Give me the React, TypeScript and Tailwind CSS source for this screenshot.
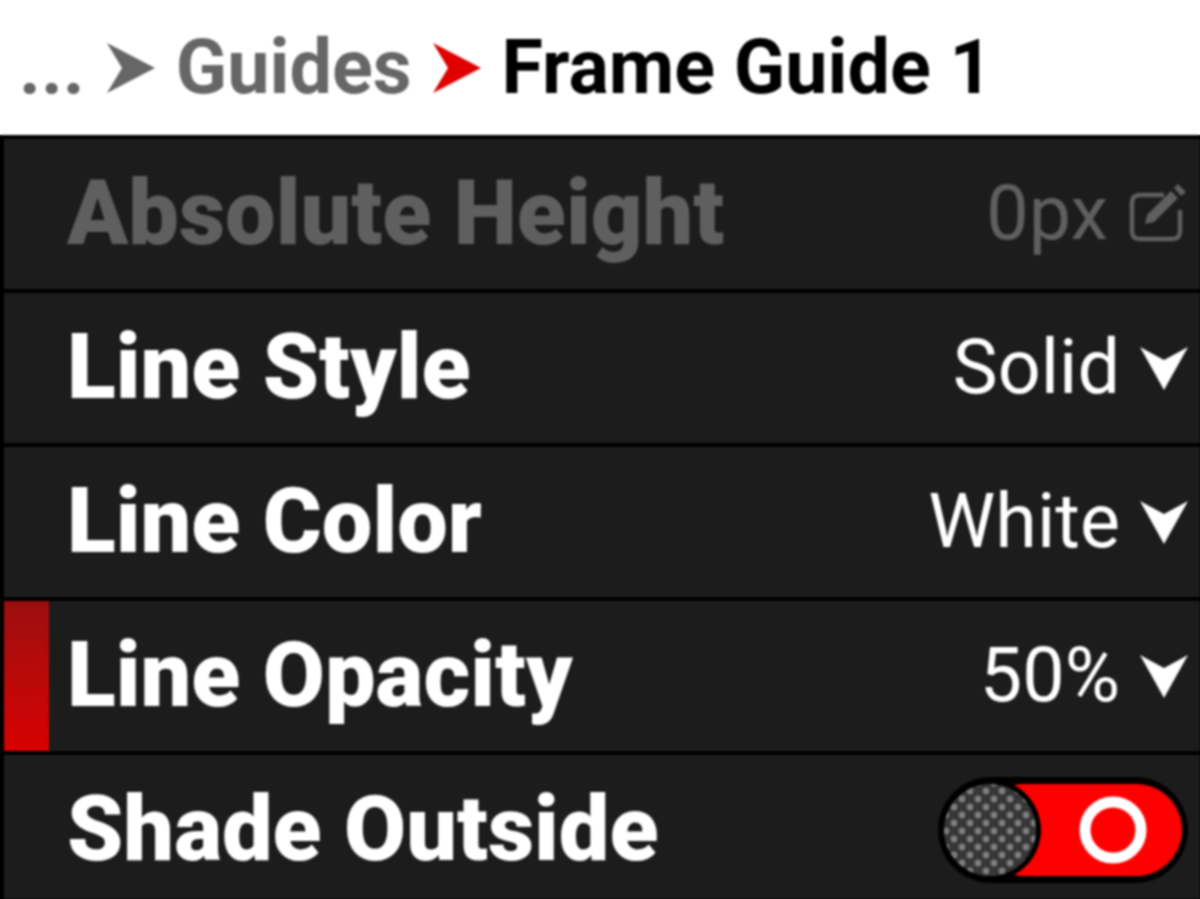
const Crumb = ({ color }: { color: string }) => (
  <svg width="48" height="50" viewBox="0 0 48 50" className="shrink-0">
    <path d="M0 0 L48 25 L0 50 L15 25 Z" fill={color} />
  </svg>
);

const Chevron = () => (
  <svg width="48" height="44" viewBox="0 0 48 44" className="shrink-0">
    <path d="M0 1 L24 14 L48 1 L24 44 Z" fill="#fff" />
  </svg>
);

const EditIcon = () => (
  <svg width="60" height="60" viewBox="0 0 60 60" className="shrink-0">
    <path d="M36 11 H12 Q4 11 4 19 V47 Q4 55 12 55 H44 Q52 55 52 47 V26" fill="none" stroke="#5f5f5f" strokeWidth="4.5" />
    <path d="M17 40 L19 31 L43 7 L50 14 L26 38 Z M46 4 L50 0 L58 8 L53 12 Z" fill="#5f5f5f" />
  </svg>
);

const Toggle = () => (
  <svg width="250" height="106" viewBox="0 0 250 106" className="shrink-0">
    <defs>
      <pattern id="dots" width="16" height="16" patternUnits="userSpaceOnUse" patternTransform="translate(4 2)">
        <rect width="16" height="16" fill="#363636" />
        <circle cx="4" cy="4" r="3.4" fill="#7d7d7d" />
        <circle cx="12" cy="12" r="3.4" fill="#7d7d7d" />
      </pattern>
    </defs>
    <rect x="0" y="0" width="250" height="106" rx="53" fill="#000" />
    <rect x="40" y="7" width="204" height="92" rx="46" fill="#ff0000" />
    <circle cx="52" cy="53" r="51" fill="#000" />
    <circle cx="52" cy="53" r="46" fill="url(#dots)" />
    <circle cx="175" cy="53" r="28" fill="none" stroke="#fff" strokeWidth="11" />
  </svg>
);

const Row = ({
  label,
  value,
  dim,
  active,
  icon,
}: {
  label: string;
  value?: string;
  dim?: boolean;
  active?: boolean;
  icon: React.ReactNode;
}) => (
  <div className="flex h-[154px] shrink-0 items-stretch border-b-[4px] border-black bg-[#1c1c1c] pr-[12px]">
    <div className={`w-[45px] shrink-0 ${active ? "bg-gradient-to-b from-[#9c0e0e] to-[#d80000]" : ""}`} />
    <div className="ml-[18px] flex flex-1 items-center justify-between">
      <span className={`text-[90px] font-black leading-none ${dim ? "text-[#5f5f5f]" : "text-white"}`}>{label}</span>
      <span className="flex items-center gap-[20px]">
        {value && (
          <span className={`text-[75.5px] font-normal leading-none ${dim ? "text-[#5f5f5f]" : "text-white"}`}>{value}</span>
        )}
        {icon}
      </span>
    </div>
  </div>
);

export default function App() {
  return (
    <div className="h-[899px] w-[1200px] overflow-hidden bg-[linear-gradient(to_bottom,#ffffff_135px,#000000_135px)]">
      <div className="flex h-[899px] w-[1200px] flex-col bg-white font-['Roboto',sans-serif] blur-[0.8px]">
        <div className="flex h-[135px] shrink-0 items-center pl-[19px] text-[75.5px] font-bold leading-none">
          <span className="text-[#666666]">...</span>
          <span className="ml-[22px]"><Crumb color="#666666" /></span>
          <span className="ml-[21px] text-[#666666]">Guides</span>
          <span className="ml-[21px]"><Crumb color="#e00000" /></span>
          <span className="ml-[21px] text-black">Frame Guide 1</span>
        </div>
        <div className="flex flex-1 flex-col overflow-hidden border-l-[4px] border-t-[4px] border-black bg-[#1c1c1c]">
          <Row label="Absolute Height" value="0px" dim icon={<EditIcon />} />
          <Row label="Line Style" value="Solid" icon={<Chevron />} />
          <Row label="Line Color" value="White" icon={<Chevron />} />
          <Row label="Line Opacity" value="50%" active icon={<Chevron />} />
          <Row label="Shade Outside" icon={<Toggle />} />
        </div>
      </div>
    </div>
  );
}
